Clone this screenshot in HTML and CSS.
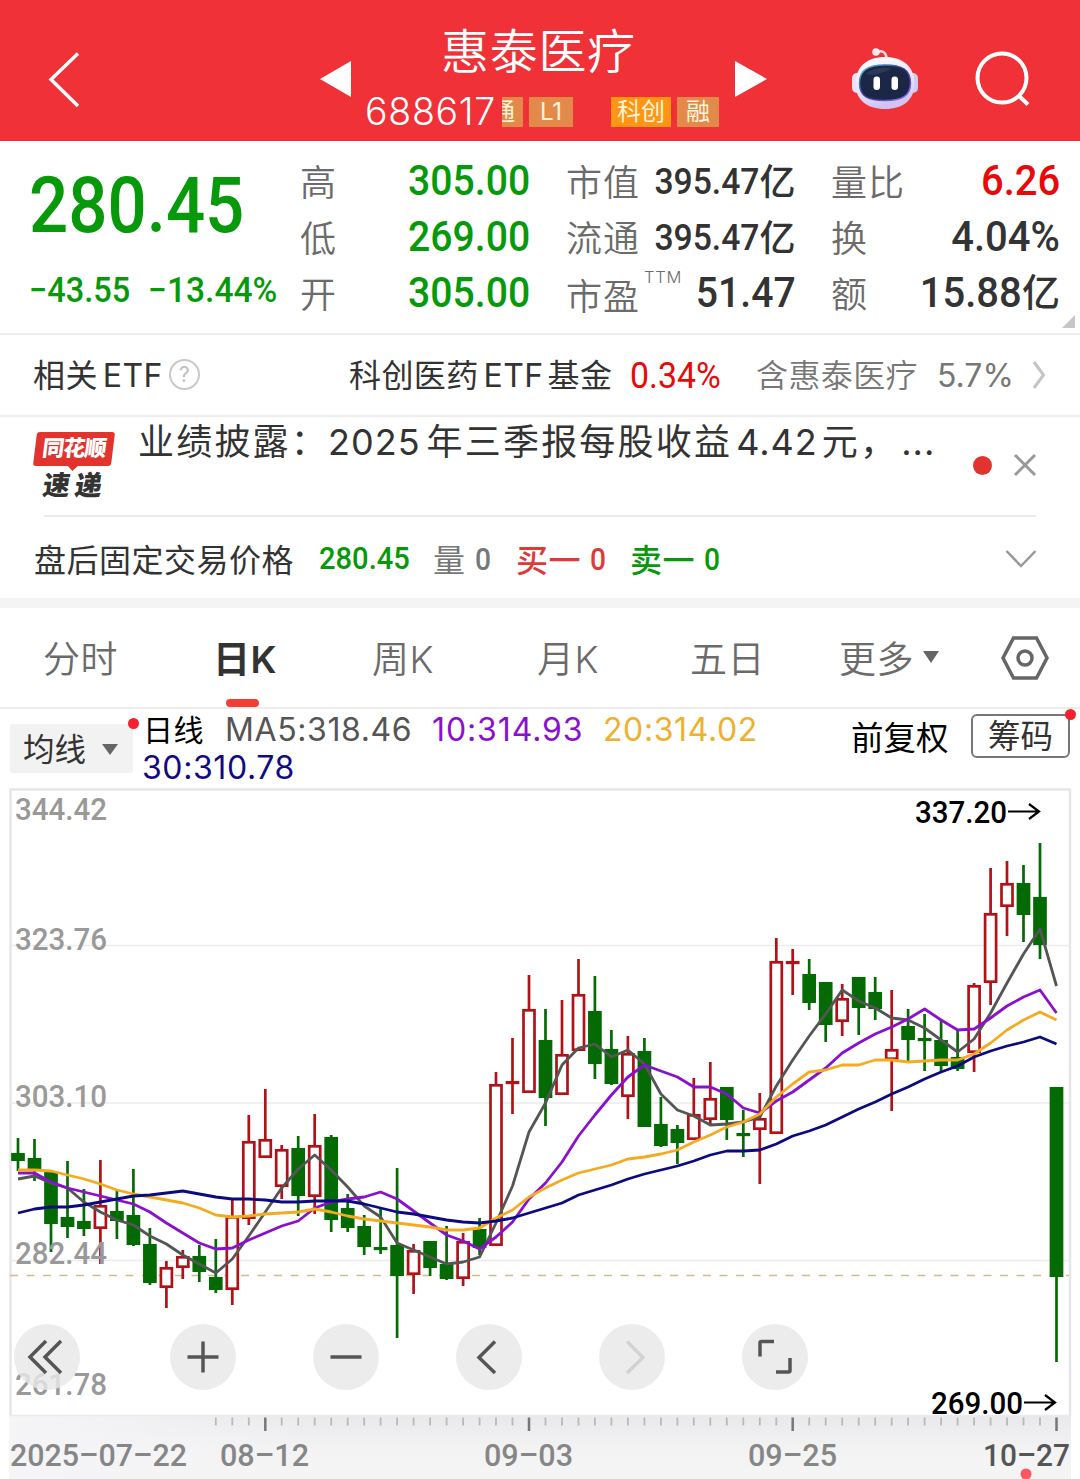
FILE: index.html
```html
<!DOCTYPE html>
<html lang="zh-CN">
<head>
  <meta charset="UTF-8">
  <meta name="viewport" content="width=device-width, initial-scale=1.0">
  <title>惠泰医疗 688617</title>
  <link rel="stylesheet" href="styles.css">
</head>
<body>
  <!-- Header -->
  <header class="header">
    <svg class="back" width="32" height="58" viewBox="0 0 32 58"><path d="M30 3.500 3 29.500l27 26.500" /></svg>
    <svg class="prev" width="32" height="36" viewBox="0 0 32 36"><path d="M0 18 31 0v36z" /></svg>
    <div class="stock">
      <h1>惠泰医疗</h1>
      <div class="code-row">
        <span class="code">688617</span>
        <span class="tag tag-cut"><i>通</i></span>
        <span class="tag tag-l1">L1</span>
        <span class="tag tag-kc">科创</span>
        <span class="tag tag-rong">融</span>
      </div>
    </div>
    <svg class="next" width="32" height="36" viewBox="0 0 32 36"><path d="M32 18 0 0v36z" /></svg>
    <svg class="robot" width="68" height="64" viewBox="0 0 68 64">
      <defs>
        <linearGradient id="head" x1="0" y1="0" x2="0.3" y2="1">
          <stop offset="0" stop-color="#ffffff" />
          <stop offset="0.6" stop-color="#e9e6fb" />
          <stop offset="1" stop-color="#cfc4f2" />
        </linearGradient>
        <linearGradient id="rim" x1="0" y1="0" x2="1" y2="1">
          <stop offset="0" stop-color="#4fc6d8" />
          <stop offset="0.5" stop-color="#3b2f90" />
          <stop offset="1" stop-color="#8f7bf5" />
        </linearGradient>
      </defs>
      <path d="M26 6c5-2 9 0 9.500 6" fill="none" stroke="#f6dfe6" stroke-width="2.500" />
      <circle cx="25" cy="6" r="3.800" fill="#fbe9ee" />
      <rect x="1" y="27" width="10" height="20" rx="5" fill="#e8e2f8" />
      <rect x="57" y="27" width="10" height="20" rx="5" fill="#cfcaf2" />
      <path d="M34 11c18 0 29.500 10 29.500 26.500S52 63 34 63 4.500 54 4.500 37.500 16 11 34 11z" fill="url(#head)" />
      <path d="M34 19c17 0 25.500 5 25.500 18S51 54.500 34 54.500 8.500 50 8.500 37 17 19 34 19z" fill="#1c2747" stroke="url(#rim)" stroke-width="1.500" />
      <path d="M15 28c5-6 16-7 25-6-6 5-17 8-25 6z" fill="#2c3858" />
      <rect x="22.500" y="30.500" width="6.500" height="13.500" rx="3.200" fill="#fff" />
      <rect x="40.500" y="30.500" width="6.500" height="13.500" rx="3.200" fill="#fff" />
    </svg>
    <svg class="search" width="56" height="56" viewBox="0 0 56 56"><circle cx="27" cy="27" r="24.500" /><path d="m44 45 9 8.500" /></svg>
  </header>

  <!-- Quote -->
  <section class="quote">
    <div class="price-box">
      <div class="price num">280.45</div>
      <div class="change"><span class="num">−43.55</span><span class="num pct">−13.44%</span></div>
    </div>
    <dl class="cells cells-a">
      <dt>高</dt><dd class="green"><span class="num">305.00</span></dd>
      <dt>低</dt><dd class="green"><span class="num">269.00</span></dd>
      <dt>开</dt><dd class="green"><span class="num">305.00</span></dd>
    </dl>
    <dl class="cells cells-b">
      <dt>市值</dt><dd class="small"><span class="num">395.47</span><b>亿</b></dd>
      <dt>流通</dt><dd class="small"><span class="num">395.47</span><b>亿</b></dd>
      <dt class="low">市盈<sup>TTM</sup></dt><dd><span class="num">51.47</span></dd>
    </dl>
    <dl class="cells cells-c">
      <dt>量比</dt><dd class="red"><span class="num">6.26</span></dd>
      <dt>换</dt><dd><span class="num">4.04%</span></dd>
      <dt>额</dt><dd><span class="num">15.88</span><b>亿</b></dd>
    </dl>
    <i class="corner"></i>
  </section>

  <!-- Related ETF -->
  <section class="etf">
    <span class="etf-title">相关<span class="latin">ETF</span></span>
    <span class="help">?</span>
    <span class="etf-name">科创医药<span class="latin">ETF</span>基金</span>
    <span class="etf-rate num">0.34%</span>
    <span class="etf-hold">含惠泰医疗</span>
    <span class="etf-part latin">5.7%</span>
    <svg class="arrow" width="14" height="30" viewBox="0 0 14 30"><path d="m2 2 9.500 13L2 28" /></svg>
  </section>

  <!-- News -->
  <section class="news">
    <div class="news-logo">
      <div class="bubble"><span>同花顺</span></div>
      <div class="express">速递</div>
    </div>
    <p class="news-text">业绩披露：<span class="latin year">2025</span>年三季报每股收益<span class="latin eps">4.42</span>元，<span class="latin dots">...</span></p>
    <i class="unread"></i>
    <svg class="close" width="24" height="24" viewBox="0 0 24 24"><path d="m2 2 20 20M22 2 2 22" /></svg>
  </section>

  <!-- After-hours fixed price trading -->
  <section class="after">
    <span class="after-title">盘后固定交易价格</span>
    <span class="num after-price">280.45</span>
    <span class="pair gray">量<span class="num">0</span></span>
    <span class="pair buy">买一<span class="num">0</span></span>
    <span class="pair sell">卖一<span class="num">0</span></span>
    <svg class="down" width="32" height="20" viewBox="0 0 32 20"><path d="m1.500 2 14.500 15L30.500 2" /></svg>
  </section>

  <!-- Period tabs -->
  <nav class="tabs">
    <a class="tab">分时</a>
    <a class="tab active">日K</a>
    <a class="tab">周K</a>
    <a class="tab">月K</a>
    <a class="tab">五日</a>
    <a class="tab more">更多<i class="caret"></i></a>
    <svg class="setting" width="48" height="44" viewBox="0 0 48 44"><path d="M12.500 2h23L46 22 35.500 42h-23L2 22z" /><circle cx="24" cy="22" r="7" /></svg>
  </nav>

  <!-- Moving averages -->
  <section class="legend">
    <div class="ma-select">均线<i class="caret"></i><i class="dot"></i></div>
    <div class="ma-list">
      <span class="ma-name">日线</span>
      <span class="ma5">MA5:318.46</span>
      <span class="ma10">10:314.93</span>
      <span class="ma20">20:314.02</span>
      <span class="ma30">30:310.78</span>
    </div>
    <span class="adjust">前复权</span>
    <span class="chips">筹码<i class="dot"></i></span>
  </section>

  <!-- K-line chart -->
  <section class="chart">
    <svg id="kline" width="1080" height="628" viewBox="0 788 1080 628"></svg>
    <div class="tools">
      <button class="tool"><svg viewBox="0 0 66 66"><path d="M32 17 16 33l16 16M47 17 31 33l16 16" /></svg></button>
      <button class="tool"><svg viewBox="0 0 66 66"><path d="M33 17.500v31M17.500 33h31" /></svg></button>
      <button class="tool"><svg viewBox="0 0 66 66"><path d="M17.500 33h31" /></svg></button>
      <button class="tool"><svg viewBox="0 0 66 66"><path d="M39 17.500 23 33.500l16 15.500" /></svg></button>
      <button class="tool off"><svg viewBox="0 0 66 66"><path d="m28 17.500 16 16L28 49" /></svg></button>
      <button class="tool"><svg viewBox="0 0 66 66"><path d="M18 32.500V19q0-1.500 1.500-1.500H32M34 48h12.500q1.500 0 1.500-1.500V34" /></svg></button>
    </div>
  </section>

  <!-- Date axis -->
  <footer class="axis">
    <svg id="axis" width="1080" height="63" viewBox="0 1416 1080 63"></svg>
  </footer>

  <script src="chart.js"></script>
</body>
</html>
```
FILE: styles.css
```css
* {
  box-sizing: border-box;
}

body {
  margin: 0;
  width: 1080px;
  height: 1479px;
  overflow: hidden;
  background: #fff;
  color: #333;
  font-family: Inter, "Noto Sans CJK SC", sans-serif;
}

i {
  font-style: normal;
}

svg {
  display: block;
  flex: none;
  fill: none;
}

.num {
  display: inline-block;
  font-family: Roboto, "Noto Sans CJK SC", sans-serif;
  font-weight: 500;
  transform: scaleX(0.91);
  transform-origin: left center;
}

.latin {
  font-family: Inter, sans-serif;
}

.green {
  color: #069a0b;
}

.red {
  color: #e60a0a;
}

.dot {
  position: absolute;
  width: 11px;
  height: 11px;
  border-radius: 50%;
  background: #f5222d;
}

.caret {
  display: inline-block;
  border: 8px solid transparent;
  border-top: 12px solid #666;
  border-bottom: 0;
}

/* Header */
.header {
  display: flex;
  height: 141px;
  background: #f03137;
}

.back {
  margin: 50px 0 0 48px;
  stroke: #fff;
  stroke-width: 3.5;
}

.prev {
  margin: 61px 0 0 240px;
  fill: #fff;
}

.next {
  margin: 61px 0 0 2px;
  fill: #fff;
}

.robot {
  margin: 46px 0 0 84px;
}

.search {
  margin: 51px 0 0 56px;
  stroke: #fff;
  stroke-width: 4;
}

.stock {
  width: 368px;
  margin-left: 13px;
  color: #fff;
}

.stock h1 {
  margin: 21px 0 0 76px;
  font-size: 48px;
  font-weight: 350;
  line-height: 62px;
  letter-spacing: 0.7px;
}

.code-row {
  display: flex;
  align-items: center;
  height: 30px;
  margin-top: 14px;
}

.code {
  width: 137px;
  margin-top: -1px;
  font-size: 37.5px;
  font-weight: 350;
  letter-spacing: 0.7px;
}

.tag {
  flex: none;
  height: 30px;
  background: #e38a4a;
  color: #fff4dc;
  font-size: 24px;
  line-height: 29px;
  text-align: center;
}

.tag-cut {
  width: 21px;
  overflow: hidden;
}

.tag-cut i {
  display: block;
  margin-left: -11px;
  width: 24px;
}

.tag-l1 {
  width: 44px;
  margin-left: 6px;
}

.tag-kc {
  width: 60px;
  margin-left: 38px;
  background: #ff9613;
}

.tag-rong {
  width: 42px;
  margin-left: 6px;
}

/* Quote */
.quote {
  position: relative;
  display: flex;
  height: 194px;
  border-bottom: 2px solid #ededed;
}

.price-box {
  width: 300px;
  padding-left: 29px;
  color: #069a0b;
}

.price {
  margin-top: 20px;
  font-size: 78px;
  line-height: 90px;
  transform: scaleX(0.885);
}

.change {
  display: flex;
  margin-top: 17px;
  font-size: 35px;
  line-height: 46px;
}

.change .num {
  width: 119px;
  white-space: nowrap;
  transform: scaleX(0.93);
}

.change .pct {
  transform: scaleX(0.96);
}

.cells {
  display: grid;
  grid-template-columns: auto 1fr;
  grid-template-rows: 56px 56px 55px;
  margin: 13px 0 0;
}

.cells-a {
  width: 230px;
}

.cells-b {
  width: 229px;
  margin-left: 36px;
}

.cells-c {
  width: 229px;
  margin-left: 36px;
}

.cells dt {
  padding-top: 1px;
  font-size: 36px;
  font-weight: 350;
  line-height: 56px;
  letter-spacing: 1px;
  color: #6b6b6b;
  white-space: nowrap;
}

.cells dt.low {
  padding-top: 3px;
}

.cells sup {
  display: inline-block;
  width: 0;
  margin-left: 4px;
  font-size: 16.5px;
  line-height: 17px;
  letter-spacing: 0.8px;
  vertical-align: 27px;
}

.cells dd {
  display: flex;
  justify-content: flex-end;
  margin: 0;
  font-size: 43px;
  line-height: 53px;
}

.cells dd .num {
  transform-origin: right center;
}

.cells-c dd .num {
  transform: scaleX(0.93);
}

.cells dd.small {
  font-size: 37px;
  line-height: 56px;
}

.cells b {
  font-size: 38px;
  font-weight: 500;
}

.cells .small b {
  font-size: 36px;
  line-height: 56px;
}

.corner {
  position: absolute;
  right: 5px;
  bottom: 5px;
  border-left: 13px solid transparent;
  border-bottom: 13px solid #c6c6c6;
}

/* Related ETF */
.etf {
  display: flex;
  align-items: center;
  height: 82px;
  padding-left: 33px;
  border-bottom: 2px solid #ededed;
  font-size: 32px;
  letter-spacing: 0.4px;
  line-height: 48px;
  white-space: nowrap;
}

.etf .latin {
  margin: 0 4px 0 5px;
}

.etf-title {
  width: 136px;
  margin-top: 1px;
}

.help {
  width: 31px;
  height: 31px;
  margin-top: -2px;
  border: 2px solid #c9c9c9;
  border-radius: 50%;
  color: #c0c0c0;
  font-size: 21px;
  line-height: 27px;
  text-align: center;
}

.etf-name {
  width: 281px;
  margin: 1px 0 0 149px;
}

.etf-rate {
  width: 126px;
  margin-top: 1px;
  color: #e60a0a;
  font-size: 36px;
  font-weight: 400;
  letter-spacing: 0;
  transform: scaleX(0.94);
}

.etf-hold {
  width: 180px;
  margin-top: 1px;
  color: #777;
  font-weight: 350;
}

.etf .etf-part {
  width: 95px;
  margin: 2px 0 0 1px;
  color: #777;
  letter-spacing: 0;
}

.arrow {
  stroke: #c4c4c4;
  stroke-width: 3;
}

/* News */
.news {
  display: flex;
  height: 98px;
  margin: 0 43px 0 34px;
  position: relative;
}

.news::after {
  content: "";
  position: absolute;
  left: 10px;
  right: 1px;
  bottom: -2px;
  height: 2px;
  background: #ebebeb;
}

.news-logo {
  width: 104px;
  padding-top: 15px;
}

.bubble {
  position: relative;
  width: 78px;
  height: 34px;
  margin-left: 1px;
  border-radius: 3px;
  background: #e2332f;
  color: #fff;
  font-size: 22px;
  font-weight: 900;
  line-height: 33px;
  letter-spacing: -1px;
  text-align: center;
  transform: skewX(-7deg);
}

.bubble::after {
  content: "";
  position: absolute;
  left: 34px;
  top: 33px;
  border: 6px solid transparent;
  border-top-color: #e2332f;
  border-bottom: 0;
}

.express {
  margin: 6px 0 0 9px;
  font-size: 27px;
  font-weight: 900;
  line-height: 28px;
  letter-spacing: 5px;
  transform: skewX(-8deg);
}

.news-text {
  flex: none;
  width: 800px;
  margin: 2px 0 0;
  font-size: 36px;
  line-height: 46px;
  letter-spacing: 2.2px;
  white-space: nowrap;
}

.news-text .latin {
  letter-spacing: 1px;
}

.news-text .year {
  margin: 0 6px 0 -1px;
}

.news-text .eps {
  margin: 0 4px 0 4px;
}

.news-text .dots {
  margin-left: 3px;
}

.unread {
  width: 19px;
  height: 19px;
  margin: 39px 0 0 35px;
  border-radius: 50%;
  background: #e2332f;
}

.close {
  margin: 36px 0 0 21px;
  stroke: #999;
  stroke-width: 3;
}

/* After-hours */
.after {
  display: flex;
  align-items: center;
  height: 93px;
  padding: 2px 0 0 34px;
  border-bottom: 10px solid #f4f4f4;
  font-size: 32px;
  letter-spacing: 0.5px;
  white-space: nowrap;
}

.after .num {
  letter-spacing: 0;
}

.after-title {
  width: 285px;
}

.after-price {
  width: 114px;
  color: #069a0b;
}

.pair {
  font-weight: 500;
}

.pair .num {
  margin-left: 9px;
  transform: translateY(-2px) scaleX(0.88);
}

.gray {
  width: 83px;
  color: #777;
  font-weight: 400;
}

.buy {
  width: 114px;
  color: #df3a3a;
}

.sell {
  width: 375px;
  color: #069a0b;
}

.down {
  margin-top: 2px;
  stroke: #999;
  stroke-width: 2.5;
}

/* Tabs */
.tabs {
  display: flex;
  align-items: center;
  height: 101px;
  padding-left: 43px;
  border-bottom: 2px solid #ededed;
}

.tab {
  position: relative;
  width: 165px;
  padding-top: 4px;
  color: #6b6b6b;
  font-size: 37px;
  font-weight: 350;
  line-height: 54px;
  letter-spacing: 0.5px;
  white-space: nowrap;
}

.tab:nth-child(1) {
  width: 170px;
}

.tab:nth-child(2) {
  width: 159px;
}

.tab:nth-child(4) {
  width: 153px;
}

.tab:nth-child(5) {
  width: 149px;
}

.tab.active {
  color: #333;
  font-weight: 600;
}

.active::after {
  content: "";
  position: absolute;
  left: 13px;
  top: 70px;
  width: 33px;
  height: 8px;
  border-radius: 4px;
  background: #f53d35;
}

.tab.more {
  display: flex;
  align-items: center;
  width: 162px;
}

.more .caret {
  margin: -5px 0 0 9px;
}

.setting {
  stroke: #666;
  stroke-width: 3.5;
}

/* Moving averages */
.legend {
  display: flex;
  height: 79px;
  font-size: 31.5px;
  white-space: nowrap;
}

.ma-select {
  position: relative;
  width: 123px;
  height: 49px;
  margin: 15px 0 0 10px;
  padding: 1px 0 0 13px;
  border-radius: 3px;
  background: #f2f2f2;
  line-height: 50px;
}

.ma-select .caret {
  margin-left: 16px;
  border-top-width: 11px;
  vertical-align: 6px;
}

.ma-select .dot {
  top: -6px;
  right: -6px;
}

.ma-list {
  display: flex;
  flex-wrap: wrap;
  align-content: flex-start;
  width: 700px;
  margin: 2px 0 0 9px;
  font-size: 32px;
  line-height: 38px;
  letter-spacing: 0.6px;
}

.ma-name {
  width: 82px;
  padding-left: 1px;
  color: #000;
  font-size: 30px;
}

.ma5 {
  width: 208px;
  padding-left: 1px;
  color: #555;
}

.ma10 {
  width: 171px;
  color: #8a10d0;
  letter-spacing: 0.9px;
}

.ma20 {
  width: 200px;
  color: #efb02e;
}

.ma30 {
  color: #120a85;
}

.adjust {
  width: 120px;
  margin: 7px 0 0 9px;
  color: #000;
  font-size: 32.5px;
  line-height: 46px;
}

.chips {
  position: relative;
  width: 99px;
  height: 44px;
  margin-top: 5px;
  border: 2px solid #777;
  border-radius: 6px;
  font-size: 32.5px;
  line-height: 42px;
  text-align: center;
}

.chips .dot {
  top: -7px;
  right: -8px;
}

/* Chart */
.chart {
  position: relative;
  height: 628px;
}

.chart svg {
  overflow: visible;
}

.tools {
  position: absolute;
  left: 14px;
  top: 536px;
  display: flex;
  gap: 77px;
}

.tool {
  width: 66px;
  height: 66px;
  padding: 0;
  border: 0;
  border-radius: 50%;
  background: rgba(232, 232, 232, 0.82);
}

.tool:first-child {
  margin-right: 13px;
}

.tool svg {
  stroke: #555;
  stroke-width: 3.5;
}

.tool.off svg {
  stroke: #d2d2d2;
}

.frame {
  stroke: #e6e6e8;
  stroke-width: 2.5;
}

.grid {
  stroke: #ebebeb;
  stroke-width: 1.5;
}

.current {
  stroke: #d3b98c;
  stroke-width: 1.5;
  stroke-dasharray: 8 8.5;
}

.chart text,
.axis text {
  font-family: Roboto, sans-serif;
  font-size: 32px;
  font-weight: 500;
  fill: #999;
}

.chart text.mark {
  fill: #000;
}

.mark-arrow {
  stroke: #000;
  stroke-width: 2.2;
}

.up {
  fill: #fff;
  stroke: #b01217;
  stroke-width: 2.7;
}

.fall {
  fill: #046a04;
  stroke: #046a04;
  stroke-width: 2.7;
}

.line {
  stroke-width: 2.8;
  stroke-linejoin: round;
}

.line-5 { stroke: #555; }
.line-10 { stroke: #8a10d0; }
.line-20 { stroke: #f5ab20; }
.line-30 { stroke: #0c0a80; }

/* Axis */
.axis {
  height: 63px;
  margin-left: 9px;
  margin-right: 9px;
  background: linear-gradient(90deg, #f5f4f6, rgba(245, 244, 246, 0) 30%), linear-gradient(#e9e9eb, #f3f3f4 55%, #f5f5f6);
}

.axis svg {
  margin-left: -9px;
}

.tick {
  stroke: #b9b9b9;
  stroke-width: 1.8;
}

.tick-major {
  stroke: #777;
  stroke-width: 2.5;
}

.axis text {
  fill: #868686;
}

.axis text.last {
  fill: #555;
}

.axis-dot {
  fill: #f8585f;
}
```
FILE: chart.js
```js
// x of the first candle and the distance between two days
const START = 18;
const STEP = 16.484;

// [high, body top, body bottom, low, up?]
const candles = [
  [1138, 1153, 1161, 1171, 0], [1139, 1158, 1171, 1181, 0], [1171, 1172, 1224, 1252, 0], [1161, 1217, 1227, 1238, 0],
  [1189, 1221, 1229, 1236, 0], [1160, 1205, 1229, 1264, 1], [1189, 1211, 1221, 1239, 0], [1169, 1215, 1245, 1246, 0],
  [1228, 1244, 1283, 1285, 0], [1261, 1267, 1288, 1308, 1], [1250, 1256, 1268, 1279, 1], [1245, 1256, 1272, 1282, 0],
  [1239, 1277, 1290, 1293, 0], [1199, 1216, 1290, 1305, 1], [1115, 1141, 1219, 1225, 1], [1089, 1139, 1158, 1158, 1],
  [1145, 1149, 1187, 1199, 1], [1136, 1148, 1196, 1216, 0], [1114, 1145, 1197, 1214, 1], [1135, 1137, 1220, 1232, 0],
  [1194, 1208, 1228, 1232, 0], [1215, 1226, 1247, 1255, 0], [1209, 1247, 1250, 1254, 0], [1168, 1245, 1276, 1338, 0],
  [1244, 1250, 1275, 1294, 1], [1241, 1241, 1268, 1276, 0], [1226, 1264, 1279, 1280, 0], [1233, 1241, 1279, 1286, 1],
  [1218, 1229, 1248, 1255, 0], [1072, 1084, 1246, 1246, 1], [1038, 1081, 1084, 1114, 1], [975, 1009, 1093, 1093, 1],
  [1009, 1040, 1098, 1126, 0], [1000, 1054, 1095, 1095, 1], [959, 994, 1051, 1051, 1], [976, 1011, 1064, 1079, 0],
  [1030, 1049, 1084, 1085, 0], [1036, 1053, 1097, 1119, 1], [1038, 1051, 1127, 1127, 0], [1097, 1124, 1146, 1147, 0],
  [1125, 1129, 1143, 1164, 0], [1078, 1114, 1140, 1140, 1], [1062, 1098, 1120, 1124, 1], [1087, 1087, 1120, 1140, 0],
  [1110, 1133, 1136, 1157, 0], [1093, 1118, 1130, 1184, 1], [938, 961, 1134, 1134, 1], [949, 961, 964, 995, 1],
  [959, 974, 1003, 1010, 0], [982, 982, 1025, 1042, 0], [984, 998, 1022, 1036, 1], [977, 977, 1008, 1035, 0],
  [977, 992, 1009, 1020, 0], [990, 1049, 1060, 1111, 1], [1009, 1026, 1040, 1061, 0], [1014, 1038, 1041, 1071, 0],
  [1020, 1040, 1066, 1072, 0], [1030, 1057, 1069, 1071, 0], [983, 985, 1053, 1072, 1], [868, 913, 983, 1005, 1],
  [861, 883, 907, 936, 1], [865, 883, 915, 942, 0], [843, 897, 945, 959, 0], [1087, 1087, 1277, 1362, 0]
];

const averages = {
  5: [1179, 1176, 1183, 1188, 1202, 1212, 1220, 1225, 1236, 1244, 1255, 1264, 1273, 1259, 1236, 1212,
    1188, 1169, 1155, 1170, 1187, 1206, 1217, 1243, 1250, 1257, 1264, 1262, 1257, 1223, 1186, 1132,
    1103, 1065, 1048, 1044, 1057, 1050, 1064, 1094, 1110, 1116, 1125, 1124, 1122, 1117, 1086, 1060,
    1036, 1014, 990, 1001, 1008, 1018, 1020, 1028, 1040, 1052, 1039, 1013, 983, 954, 929, 986],
  10: [1173, 1173, 1182, 1188, 1192, 1196, 1200, 1204, 1212, 1223, 1233, 1243, 1249, 1248, 1240, 1233,
    1226, 1221, 1208, 1202, 1199, 1197, 1192, 1199, 1211, 1223, 1235, 1241, 1249, 1237, 1222, 1199,
    1183, 1162, 1136, 1115, 1095, 1077, 1065, 1071, 1077, 1087, 1087, 1094, 1108, 1113, 1101, 1092,
    1080, 1068, 1053, 1043, 1034, 1027, 1019, 1009, 1020, 1030, 1029, 1018, 1006, 997, 990, 1013],
  20: [1170, 1170, 1171, 1175, 1179, 1184, 1190, 1194, 1197, 1200, 1203, 1208, 1215, 1217, 1216, 1214,
    1213, 1212, 1209, 1212, 1216, 1219, 1221, 1223, 1225, 1227, 1230, 1230, 1228, 1218, 1210, 1197,
    1188, 1180, 1173, 1169, 1165, 1159, 1157, 1154, 1150, 1142, 1135, 1127, 1122, 1114, 1097, 1084,
    1072, 1070, 1065, 1065, 1060, 1060, 1062, 1061, 1060, 1060, 1054, 1043, 1030, 1020, 1012, 1020],
  30: [1213, 1209, 1207, 1207, 1205, 1202, 1199, 1196, 1195, 1193, 1191, 1194, 1197, 1199, 1199, 1200,
    1202, 1202, 1201, 1201, 1201, 1204, 1208, 1212, 1214, 1217, 1220, 1222, 1223, 1221, 1218, 1213,
    1208, 1203, 1195, 1190, 1185, 1179, 1174, 1170, 1166, 1161, 1155, 1151, 1151, 1150, 1144, 1136,
    1131, 1125, 1117, 1109, 1102, 1094, 1087, 1079, 1072, 1066, 1057, 1051, 1046, 1042, 1037, 1044]
};

const x = i => +(START + i * STEP).toFixed(1);

function label(text, left, baseline, width, cls = '') {
  return `<text class="${cls}" x="${left}" y="${baseline}" textLength="${width}" lengthAdjust="spacingAndGlyphs">${text}</text>`;
}

function drawChart() {
  let out = '<path class="frame" d="M10.500 1416V789.500H1070V1416" />';
  out += '<path class="grid" d="M11 945.500H1069M11 1103H1069M11 1260.500H1069M10 1415.500H1070" />';
  out += '<path class="current" d="M10 1275.500H1069" />';

  candles.forEach(([high, top, bottom, low, up], i) => {
    const c = x(i);
    out += `<g class="${up ? 'up' : 'fall'}"><path d="M${c} ${high}V${top}M${c} ${bottom}V${low}" />`;
    out += `<rect x="${c - 5.5}" y="${top + 1.3}" width="11" height="${Math.max(bottom - top - 2.6, 0.5)}" /></g>`;
  });

  for (const days of [5, 10, 20, 30]) {
    const points = averages[days].map((y, i) => `${x(i)},${y}`).join(' ');
    out += `<polyline class="line line-${days}" points="${points}" />`;
  }

  // price scale
  out += label('344.42', 15, 820, 92);
  out += label('323.76', 15, 950, 92);
  out += label('303.10', 15, 1107, 92);
  out += label('282.44', 15, 1264, 92);
  out += label('261.78', 15, 1394.5, 92);

  // highest and lowest price
  out += label('337.20', 915, 823, 92, 'mark');
  out += '<path class="mark-arrow" d="M1008 811.500H1039M1029 804l10 7.500-10 7.500" />';
  out += label('269.00', 931, 1413.5, 92, 'mark');
  out += '<path class="mark-arrow" d="M1024 1402.500H1055M1045 1395l10 7.500-10 7.500" />';
  document.getElementById('kline').innerHTML = out;
}

function drawAxis() {
  let out = '';
  for (let i = 12; i < candles.length; i++) {
    const major = i % 16 === 15;
    out += `<path class="${major ? 'tick-major' : 'tick'}" d="M${x(i)} 1417.500V${major ? 1431 : 1425.5}" />`;
  }
  out += label('2025–07–22', 10, 1465.5, 177);
  out += label('08–12', 220, 1465.5, 89);
  out += label('09–03', 484, 1465.5, 89);
  out += label('09–25', 748, 1465.5, 89);
  out += label('10–27', 983, 1465.5, 87, 'last');
  out += '<circle class="axis-dot" cx="1026" cy="1474" r="5.500" />';
  document.getElementById('axis').innerHTML = out;
}

drawChart();
drawAxis();
```
